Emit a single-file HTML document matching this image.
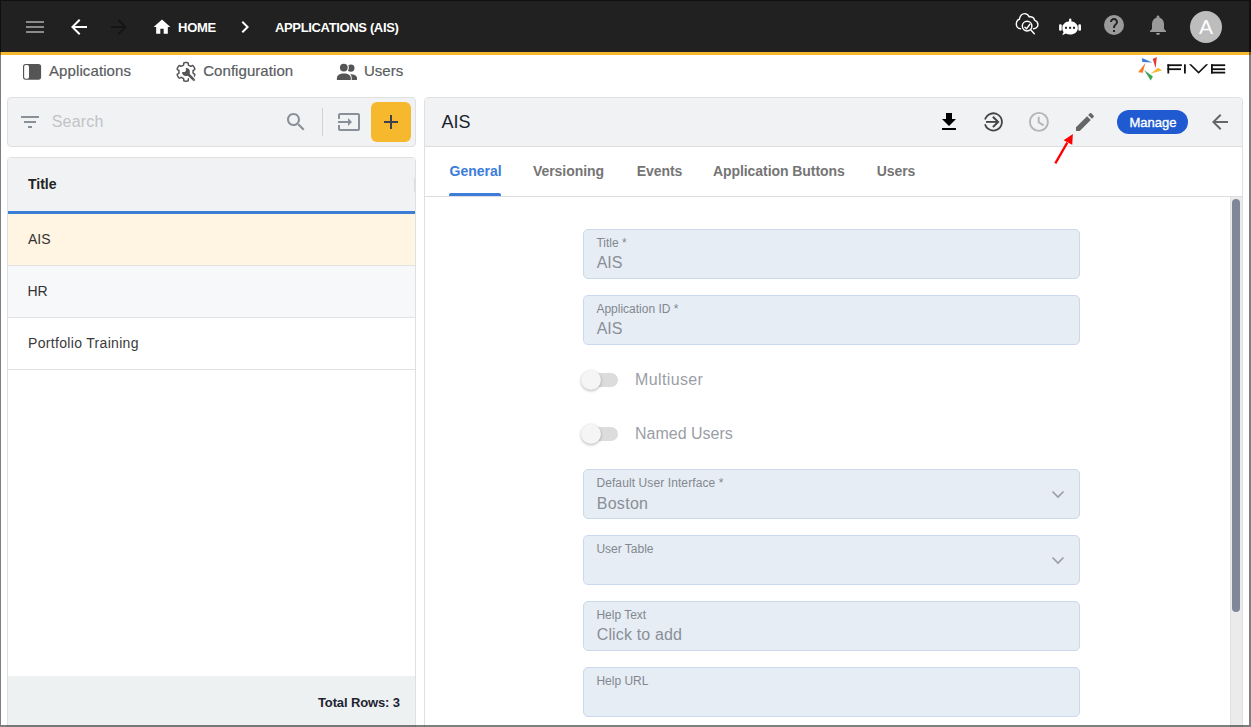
<!DOCTYPE html>
<html><head><meta charset="utf-8">
<style>
*{box-sizing:border-box;margin:0;padding:0}
html,body{width:1251px;height:727px;overflow:hidden;background:#fff;font-family:"Liberation Sans",sans-serif}
.a{position:absolute}
.t{position:absolute;white-space:nowrap;line-height:normal}
svg{position:absolute;overflow:visible}
#topbar{left:0;top:0;width:1251px;height:52px;background:#212121}
#orange{left:0;top:52px;width:1251px;height:3px;background:#f6b82c}
#frame{left:0;top:0;width:1251px;height:727px;border-style:solid;border-color:rgba(0,0,0,.5);border-width:1px 2px 2px 1px;z-index:50;pointer-events:none}
.fld{left:583px;width:497px;height:50px;background:#e6edf5;border:1px solid #cad9eb;border-radius:5px}
.lbl{left:596.4px;font-size:12px;color:#83888f}
.val{left:596.7px;font-size:16px;color:#8a8f96}
.tog{left:635px;font-size:16px;color:#9a9ea6}
</style></head>
<body>
<div class="a" id="topbar"></div>
<div class="a" id="orange"></div>

<!-- top bar icons -->
<svg style="left:26px;top:21px" width="18" height="13"><rect x="0" y="0" width="18" height="2" fill="#8a8a8a"/><rect x="0" y="5" width="18" height="2" fill="#8a8a8a"/><rect x="0" y="10" width="18" height="2" fill="#8a8a8a"/></svg>
<svg style="left:67px;top:15px" width="24" height="24" viewBox="0 0 24 24"><path d="M20 11H7.83l5.59-5.59L12 4l-8 8 8 8 1.41-1.41L7.83 13H20v-2z" fill="#fff"/></svg>
<svg style="left:107px;top:15px" width="24" height="24" viewBox="0 0 24 24"><path d="M12 4l-1.41 1.41L16.17 11H4v2h12.17l-5.58 5.59L12 20l8-8z" fill="#151515"/></svg>
<svg style="left:152px;top:17px" width="20" height="20" viewBox="0 0 24 24"><path d="M10 20v-6h4v6h5v-8h3L12 3 2 12h3v8z" fill="#fff"/></svg>
<div class="t" id="home" style="left:178px;top:20px;letter-spacing:-0.25px;font-size:13px;font-weight:bold;color:#fff">HOME</div>
<svg style="left:233px;top:15px" width="24" height="24" viewBox="0 0 24 24"><path d="M8.59 16.59L13.17 12 8.59 7.41 10 6l6 6-6 6-1.41-1.41z" fill="#fff"/></svg>
<div class="t" id="appais" style="left:275px;top:20px;letter-spacing:-0.35px;font-size:13px;font-weight:bold;color:#fff">APPLICATIONS (AIS)</div>

<!-- right icons -->
<svg style="left:1012px;top:10px" width="30" height="30" viewBox="0 0 30 30" fill="none" stroke="#fff" stroke-width="1.45" stroke-linecap="round">
<path d="M8.5 18.8C6 18.6 4.3 16.4 4.3 13.9C4.3 11.5 5.6 9.8 7.4 9.2C8.1 5.8 10.1 3.6 12.6 3.6C14.8 3.6 16.4 4.9 17.3 6.9C19.8 6.3 22.2 7.7 22.5 10.1C24.5 10.9 25.9 12.5 25.9 14.6C25.9 16.9 24 18.7 21.5 18.8"/>
<circle cx="15.1" cy="16.1" r="4.8"/>
<path d="M18.7 19.8l3.6 3.9"/>
<path d="M12.9 17.2l1.7 1.5 3.3-4.4"/>
</svg>
<svg style="left:1055px;top:12px" width="30" height="30" viewBox="0 0 30 30">
<rect x="14" y="6.5" width="2.4" height="4" rx="1.2" fill="#fff"/>
<path d="M15.1 9.3c4.4 0 7.8 2.9 7.8 6.7s-3.4 6.5-7.8 6.5c-1.6 0-3.1-.3-4.3-.9L7.2 23.3l1.4-3.2C7.8 19 7.3 17.6 7.3 16c0-3.8 3.4-6.7 7.8-6.7z" fill="#fff"/>
<rect x="4.1" y="12.2" width="2.6" height="6.6" rx="1.1" fill="#fff"/>
<rect x="23.4" y="12.2" width="2.6" height="6.6" rx="1.1" fill="#fff"/>
<rect x="10" y="14.8" width="2" height="2" fill="#222"/>
<rect x="14.1" y="14.8" width="2" height="2" fill="#222"/>
<rect x="18" y="14.8" width="2" height="2" fill="#222"/>
</svg>
<svg style="left:1102px;top:13px" width="24" height="24" viewBox="0 0 24 24"><circle cx="12" cy="12" r="10" fill="#9a9a9a"/><path d="M13 19h-2v-2h2v2zm2.07-7.75l-.9.92C13.45 12.9 13 13.5 13 15h-2v-.5c0-1.1.45-2.1 1.17-2.83l1.24-1.26c.37-.36.59-.86.59-1.41 0-1.1-.9-2-2-2s-2 .9-2 2H8c0-2.21 1.79-4 4-4s4 1.79 4 4c0 .88-.36 1.68-.93 2.25z" fill="#212121"/></svg>
<svg style="left:1146px;top:13px" width="24" height="24" viewBox="0 0 24 24"><path d="M12 22c1.1 0 2-.9 2-2h-4c0 1.1.89 2 2 2zm6-6v-5c0-3.07-1.64-5.64-4.5-6.32V4c0-.83-.67-1.5-1.5-1.5s-1.5.67-1.5 1.5v.68C7.63 5.36 6 7.92 6 11v5l-2 2v1h16v-1l-2-2z" fill="#9a9a9a"/></svg>
<div class="a" style="left:1190px;top:11px;width:32px;height:32px;border-radius:50%;background:#bdbdbd"></div>
<div class="t" id="avA" style="left:1199px;top:15.4px;font-size:21px;color:#fff">A</div>

<!-- nav -->
<svg style="left:22px;top:57px" width="22" height="28" viewBox="0 0 22 28"><rect x="1" y="6.9" width="18.1" height="15.8" rx="2.6" fill="#555"/><rect x="2.15" y="7.95" width="4.85" height="13.8" rx="1.7" fill="#fff"/></svg>
<div class="t" id="navApp" style="left:49px;top:62px;letter-spacing:0.1px;font-size:15px;color:#595c60;-webkit-text-stroke:0.2px #595c60">Applications</div>
<svg style="left:172px;top:57px" width="28" height="28" viewBox="0 0 28 28">
<path d="M21.10 14.85 L21.10 15.10 L21.08 15.35 L21.07 15.59 L21.05 15.84 L21.08 16.10 L21.36 16.41 L22.17 16.89 L22.75 17.36 L22.81 17.71 L22.73 18.03 L22.62 18.33 L22.50 18.63 L22.36 18.93 L22.21 19.22 L22.05 19.50 L21.89 19.78 L21.71 20.05 L21.52 20.32 L21.33 20.57 L21.12 20.82 L20.89 21.05 L20.54 21.17 L19.85 20.91 L19.03 20.44 L18.62 20.36 L18.38 20.46 L18.18 20.60 L17.97 20.74 L17.76 20.87 L17.55 21.00 L17.33 21.12 L17.11 21.23 L16.89 21.34 L16.67 21.45 L16.46 21.61 L16.33 22.01 L16.32 22.95 L16.20 23.68 L15.93 23.91 L15.61 24.00 L15.29 24.06 L14.97 24.10 L14.65 24.13 L14.32 24.14 L14.00 24.15 L13.68 24.14 L13.35 24.13 L13.03 24.10 L12.71 24.06 L12.39 24.00 L12.07 23.91 L11.80 23.68 L11.68 22.95 L11.67 22.01 L11.54 21.61 L11.33 21.45 L11.11 21.34 L10.89 21.23 L10.67 21.12 L10.45 21.00 L10.24 20.87 L10.03 20.74 L9.82 20.60 L9.62 20.46 L9.38 20.36 L8.97 20.44 L8.15 20.91 L7.46 21.17 L7.11 21.05 L6.88 20.82 L6.67 20.57 L6.48 20.32 L6.29 20.05 L6.11 19.78 L5.95 19.50 L5.79 19.22 L5.64 18.93 L5.50 18.63 L5.38 18.33 L5.27 18.03 L5.19 17.71 L5.25 17.36 L5.83 16.89 L6.64 16.41 L6.92 16.10 L6.95 15.84 L6.93 15.59 L6.92 15.35 L6.90 15.10 L6.90 14.85 L6.90 14.60 L6.92 14.35 L6.93 14.11 L6.95 13.86 L6.92 13.60 L6.64 13.29 L5.83 12.81 L5.25 12.34 L5.19 11.99 L5.27 11.67 L5.38 11.37 L5.50 11.07 L5.64 10.77 L5.79 10.48 L5.95 10.20 L6.11 9.92 L6.29 9.65 L6.48 9.38 L6.67 9.13 L6.88 8.88 L7.11 8.65 L7.46 8.53 L8.15 8.79 L8.97 9.26 L9.38 9.34 L9.62 9.24 L9.82 9.10 L10.03 8.96 L10.24 8.83 L10.45 8.70 L10.67 8.58 L10.89 8.47 L11.11 8.36 L11.33 8.25 L11.54 8.09 L11.67 7.69 L11.68 6.75 L11.80 6.02 L12.07 5.79 L12.39 5.70 L12.71 5.64 L13.03 5.60 L13.35 5.57 L13.68 5.56 L14.00 5.55 L14.32 5.56 L14.65 5.57 L14.97 5.60 L15.29 5.64 L15.61 5.70 L15.93 5.79 L16.20 6.02 L16.32 6.75 L16.33 7.69 L16.46 8.09 L16.67 8.25 L16.89 8.36 L17.11 8.47 L17.33 8.58 L17.55 8.70 L17.76 8.83 L17.97 8.96 L18.18 9.10 L18.38 9.24 L18.62 9.34 L19.03 9.26 L19.85 8.79 L20.54 8.53 L20.89 8.65 L21.12 8.88 L21.33 9.13 L21.52 9.38 L21.71 9.65 L21.89 9.92 L22.05 10.20 L22.21 10.48 L22.36 10.77 L22.50 11.07 L22.62 11.37 L22.73 11.67 L22.81 11.99 L22.75 12.34 L22.17 12.81 L21.36 13.29 L21.08 13.60 L21.05 13.86 L21.07 14.11 L21.08 14.35 L21.10 14.60Z" fill="none" stroke="#555" stroke-width="1.5" stroke-linejoin="round"/>
<path d="M16.5 17.5L22 23" stroke="#fff" stroke-width="5" stroke-linecap="round"/>
<circle cx="14" cy="15" r="3.9" fill="#555"/>
<circle cx="11.4" cy="12.4" r="2.6" fill="#fff"/>
<path d="M15.5 16.5L21.9 22.9" stroke="#555" stroke-width="2.5" stroke-linecap="round"/>
<circle cx="21.9" cy="22.9" r="0.5" fill="#fff"/>
</svg>
<div class="t" id="navCfg" style="left:203.2px;top:62px;letter-spacing:0.06px;font-size:15px;color:#595c60;-webkit-text-stroke:0.2px #595c60">Configuration</div>
<svg style="left:332px;top:57px" width="30" height="30" viewBox="0 0 30 30" fill="#555">
<circle cx="18.9" cy="11.1" r="3.6"/><circle cx="11.8" cy="10.6" r="5.1" fill="#fff"/><circle cx="11.8" cy="10.6" r="3.9"/>
<path d="M4.9 22.9V20.9c0-2.4 2.6-4.4 7-4.4s6.9 2 6.9 4.4v2z"/><path d="M19.7 22.9v-2c0-1.6-.6-2.9-1.5-3.9 4 .3 6.8 1.7 6.8 3.9v2z"/>
</svg>
<div class="t" id="navUsers" style="left:364px;top:62px;font-size:15px;color:#595c60;-webkit-text-stroke:0.2px #595c60">Users</div>


<!-- FIVE logo -->
<svg style="left:1130px;top:52px" width="110" height="36" viewBox="0 0 110 36">
<polygon points="11.9,6 12.3,9.9 22.4,10.4" fill="#3a7bd5"/>
<polygon points="26.8,5.1 22.7,7 25.7,16.3" fill="#e03a3a"/>
<polygon points="28.1,15.8 32.1,18.5 20.7,21.5" fill="#f5b82e"/>
<polygon points="14.1,18 22.9,24.6 20.7,28.6" fill="#3aa655"/>
<polygon points="15.4,11 12.8,20.7 8.1,20.2" fill="#f57c2a"/>
<g fill="#111">
<rect x="37.4" y="12.3" width="14.5" height="1.8"/><rect x="37.4" y="12.3" width="1.8" height="9.2"/><rect x="37.4" y="16.3" width="13.6" height="1.8"/>
<rect x="54" y="12.3" width="1.8" height="9.2"/>
<polygon points="59,12.3 61.2,12.3 68.6,19.6 76,12.3 78.2,12.3 68.6,21.7"/>
<rect x="81" y="12.3" width="14.2" height="1.8"/><rect x="81" y="12.3" width="1.8" height="9.2"/><rect x="81" y="16.3" width="14.2" height="1.8"/><rect x="81" y="19.7" width="14.2" height="1.8"/>
</g>
</svg>

<!-- LEFT PANEL: search -->
<div class="a" style="left:7px;top:97px;width:409px;height:50px;background:#f1f2f4;border:1px solid #dfe0e2;border-radius:4px"></div>
<svg style="left:18px;top:110px" width="24" height="24" viewBox="0 0 24 24"><path d="M10 18h4v-2h-4v2zM3 6v2h18V6H3zm3 7h12v-2H6v2z" fill="#8a9099"/></svg>
<div class="t" id="search" style="left:51.7px;top:113.2px;letter-spacing:0.2px;font-size:16px;color:#c2c3c5">Search</div>
<svg style="left:284px;top:110px" width="24" height="24" viewBox="0 0 24 24"><path d="M15.5 14h-.79l-.28-.27C15.41 12.59 16 11.11 16 9.5 16 5.91 13.09 3 9.5 3S3 5.91 3 9.5 5.91 16 9.5 16c1.61 0 3.09-.59 4.23-1.57l.27.28v.79l5 4.99L20.49 19l-4.99-5zm-6 0C7.01 14 5 11.99 5 9.5S7.01 5 9.5 5 14 7.01 14 9.5 11.99 14 9.5 14z" fill="#8a9099"/></svg>
<div class="a" style="left:322px;top:108px;width:1px;height:28px;background:#cfd1d4"></div>
<svg style="left:337px;top:110px" width="24" height="24" viewBox="0 0 24 24"><path d="M21 3.01H3c-1.1 0-2 .9-2 2V9h2V4.99h18v14.03H3V15H1v4.01c0 1.1.9 1.98 2 1.98h18c1.1 0 2-.88 2-1.98v-14c0-1.11-.9-2-2-2zM11 16l4-4-4-4v3H1v2h10v3z" fill="#8a9099"/></svg>
<div class="a" style="left:371px;top:102px;width:40px;height:40px;background:#f6b82c;border-radius:6px"></div>
<svg style="left:379px;top:110px" width="24" height="24" viewBox="0 0 24 24"><path d="M19 13h-6v6h-2v-6H5v-2h6V5h2v6h6v2z" fill="#3c4150"/></svg>

<!-- LEFT PANEL: grid -->
<div class="a" style="left:7px;top:157px;width:409px;height:580px;background:#fff;border:1px solid #dfe0e2;border-radius:4px;overflow:hidden">
  <div class="a" style="left:0;top:0;width:407px;height:53px;background:#f1f2f4"></div>
  <div class="a" style="left:406px;top:20px;width:1px;height:14px;background:#dcdde0"></div>
  <div class="a" style="left:0;top:53px;width:407px;height:3px;background:#3a7fd5"></div>
  <div class="a" style="left:0;top:56px;width:407px;height:51px;background:#fff5e2"></div>
  <div class="a" style="left:0;top:107px;width:407px;height:1px;background:#e2e2e2"></div>
  <div class="a" style="left:0;top:108px;width:407px;height:51px;background:#f7f8fa"></div>
  <div class="a" style="left:0;top:159px;width:407px;height:1px;background:#e2e2e2"></div>
  <div class="a" style="left:0;top:211px;width:407px;height:1px;background:#e2e2e2"></div>
  <div class="a" style="left:0;top:518px;width:407px;height:60px;background:#eef1f2"></div>
</div>
<div class="t" id="gTitle" style="left:28px;top:176px;font-size:14px;font-weight:bold;color:#222">Title</div>
<div class="t" id="gAIS" style="left:28px;top:231px;font-size:14px;color:#333">AIS</div>
<div class="t" id="gHR" style="left:27.5px;top:283px;font-size:14px;color:#333">HR</div>
<div class="t" id="gPT" style="left:28px;top:335px;letter-spacing:0.32px;font-size:14px;color:#3a3a3a">Portfolio Training</div>
<div class="t" id="total" style="left:318px;top:694.7px;letter-spacing:-0.13px;font-size:13px;font-weight:bold;color:#1f2330">Total Rows: 3</div>

<!-- RIGHT PANEL -->
<div class="a" style="left:424px;top:97px;width:819px;height:640px;background:#fff;border:1px solid #dfe0e2;border-radius:4px;overflow:hidden">
  <div class="a" style="left:0;top:0;width:817px;height:49px;background:#f1f2f4;border-bottom:1px solid #dcdddf"></div>
  <div class="a" style="left:0;top:98px;width:817px;height:1px;background:#dcdddf"></div>
  <div class="a" style="left:805px;top:99px;width:13px;height:540px;background:#ebebeb;border-left:1px solid #e0e0e0;border-right:1px solid #e0e0e0"></div>
  <div class="a" style="left:807px;top:101px;width:8px;height:413px;background:#7f8799;border-radius:4px"></div>
</div>
<div class="t" id="hAIS" style="left:441.6px;top:111.7px;font-size:18px;color:#1a1f2e">AIS</div>
<svg style="left:937px;top:110px" width="24" height="24" viewBox="0 0 24 24"><path d="M19 9h-4V3H9v6H5l7 7 7-7zM5 18v2h14v-2H5z" fill="#000"/></svg>
<svg style="left:978px;top:106px" width="30" height="30" viewBox="0 0 30 30" fill="none" stroke="#444" stroke-width="1.8">
<path d="M7.04 13.5A8.6 8.6 0 1 1 7.04 18.3"/><path d="M8 15.9h11.6"/><path d="M14.9 10.7l5.2 5.2-5.2 5.2" stroke-width="2"/></svg>
<svg style="left:1028px;top:111px" width="22" height="22" viewBox="0 0 22 22" fill="none" stroke="#b5b5b5" stroke-width="1.9">
<circle cx="10.9" cy="10.9" r="9"/><path d="M10.7 5.8V11.3l4.9 3.1"/></svg>
<svg style="left:1073px;top:110px" width="24" height="24" viewBox="0 0 24 24"><path d="M3 17.25V21h3.75L17.81 9.94l-3.75-3.75L3 17.25zM20.71 7.04c.39-.39.39-1.02 0-1.41l-2.34-2.34c-.39-.39-1.02-.39-1.41 0l-1.83 1.83 3.75 3.75 1.83-1.83z" fill="#666"/></svg>
<div class="a" style="left:1117px;top:110px;width:71px;height:24px;background:#1f5ad1;border-radius:12px"></div>
<div class="t" id="manage" style="left:1129.4px;top:115.2px;letter-spacing:0px;font-size:13px;color:#fff;-webkit-text-stroke:0.35px #fff">Manage</div>
<svg style="left:1208px;top:110px" width="24" height="24" viewBox="0 0 24 24"><path d="M20 11H7.83l5.59-5.59L12 4l-8 8 8 8 1.41-1.41L7.83 13H20v-2z" fill="#666"/></svg>
<!-- red arrow -->
<svg style="left:1040px;top:125px" width="50" height="50" viewBox="0 0 50 50"><path d="M15.3 38.3L27.3 17.6" stroke="#ff0000" stroke-width="2.3"/><polygon points="32.9,9 23.6,15.2 32.2,19.8" fill="#ff0000"/></svg>

<!-- tabs -->
<div class="t" id="tGen" style="left:449.5px;top:163.3px;font-size:14px;font-weight:bold;color:#3b7dd8">General</div>
<div class="a" style="left:449px;top:193px;width:52px;height:3px;background:#3b7dd8;border-radius:2px 2px 0 0"></div>
<div class="t" id="tVer" style="left:533px;top:163.3px;font-size:14px;font-weight:bold;color:#757575;letter-spacing:-0.06px">Versioning</div>
<div class="t" id="tEv" style="left:636.7px;top:163.3px;font-size:14px;font-weight:bold;color:#757575;letter-spacing:-0.06px">Events</div>
<div class="t" id="tAB" style="left:712.9px;top:163.3px;font-size:14px;font-weight:bold;color:#757575;letter-spacing:-0.06px">Application Buttons</div>
<div class="t" id="tUs" style="left:876.7px;top:163.3px;font-size:14px;font-weight:bold;color:#757575;letter-spacing:-0.06px">Users</div>

<!-- form -->
<div class="a fld" style="top:229px"></div>
<div class="t lbl" id="l1" style="top:236.1px">Title *</div>
<div class="t val" id="v1" style="top:254.1px">AIS</div>
<div class="a fld" style="top:295px"></div>
<div class="t lbl" id="l2" style="top:302.1px">Application ID *</div>
<div class="t val" id="v2" style="top:320.1px">AIS</div>

<div class="a" style="left:584px;top:373px;width:34px;height:14px;border-radius:7px;background:#dcdcdc"></div>
<div class="a" style="left:581px;top:370px;width:20px;height:20px;border-radius:50%;background:#f5f5f5;box-shadow:0 1px 3px rgba(0,0,0,.3)"></div>
<div class="t tog" id="m1" style="top:371px;letter-spacing:0.37px">Multiuser</div>
<div class="a" style="left:584px;top:427px;width:34px;height:14px;border-radius:7px;background:#dcdcdc"></div>
<div class="a" style="left:581px;top:424px;width:20px;height:20px;border-radius:50%;background:#f5f5f5;box-shadow:0 1px 3px rgba(0,0,0,.3)"></div>
<div class="t tog" id="m2" style="top:425px">Named Users</div>

<div class="a fld" style="top:469px"></div>
<div class="t lbl" id="l3" style="top:476.1px;letter-spacing:0.1px">Default User Interface *</div>
<div class="t val" id="v3" style="top:495px;letter-spacing:0.3px">Boston</div>
<svg class="chev" style="left:1046px;top:482px" width="24" height="24" viewBox="0 0 24 24"><path d="M6.5 9.5l5.5 5.5 5.5-5.5" fill="none" stroke="#9a9ea4" stroke-width="1.6"/></svg>
<div class="a fld" style="top:535px"></div>
<div class="t lbl" id="l4" style="top:542.1px">User Table</div>
<svg class="chev" style="left:1046px;top:548px" width="24" height="24" viewBox="0 0 24 24"><path d="M6.5 9.5l5.5 5.5 5.5-5.5" fill="none" stroke="#9a9ea4" stroke-width="1.6"/></svg>
<div class="a fld" style="top:601px"></div>
<div class="t lbl" id="l5" style="top:608.1px">Help Text</div>
<div class="t val" id="v5" style="top:626.4px;letter-spacing:0.15px">Click to add</div>
<div class="a fld" style="top:667px"></div>
<div class="t lbl" id="l6" style="top:674.1px">Help URL</div>

<div class="a" id="frame"></div>
</body></html>
